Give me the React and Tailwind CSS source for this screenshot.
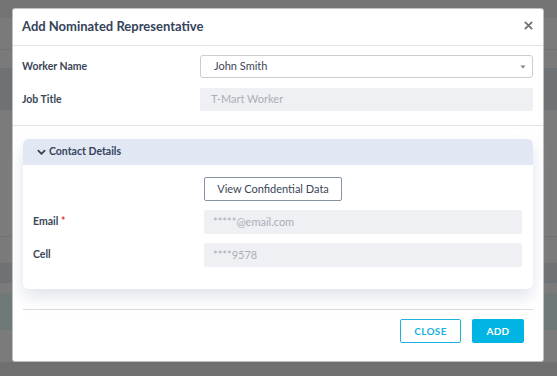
import React from "react";

export default function App() {
  return (
    <div className="relative w-[557px] h-[376px] overflow-hidden bg-[#7b7b7b]" style={{ fontFamily: "Lato, 'Noto Sans', sans-serif" }}>
      {/* background page (dimmed) */}
      <div className="flex flex-col h-full">
        <div className="h-[18px] bg-[#737373]" />
        <div className="h-[32px] bg-[#7a7a7a] border-b border-[#717171]" />
        <div className="h-[18px] bg-[#7a7a7a]" />
        <div className="h-[42px] bg-[#6f7275]" />
        <div className="h-[127px] bg-[#7b7b7b] border-b border-[#727272]" />
        <div className="h-[26px] bg-[#7a7a7a]" />
        <div className="h-[20px] bg-[#6f7275]" />
        <div className="h-[10px] bg-[#7a7a7a]" />
        <div className="h-[37px] bg-[#6f7a78]" />
        <div className="flex-1 bg-[#7b7b7b]" />
        <div className="h-[14px] bg-[#707070]" />
      </div>

      {/* modal */}
      <div className="absolute left-[12px] top-[8px] w-[532px] h-[354px] bg-white rounded-[3px] border border-[#5f5f5f]/40 flex flex-col">
        <div className="h-[37px] flex items-center justify-between pl-[9px] pr-[10px] border-b border-[#dfe2e6]">
          <div className="text-[13px] font-bold text-[#34435a]">Add Nominated Representative</div>
          <svg width="9" height="9" viewBox="0 0 10 10" className="mt-[-4px]">
            <path d="M1.5 1.5 L8.5 8.5 M8.5 1.5 L1.5 8.5" stroke="#6b6f75" strokeWidth="2" strokeLinecap="round" />
          </svg>
        </div>

        <div className="flex flex-col gap-[10px] pt-[9px] pb-[14px] pl-[9px] pr-[10px] border-b border-[#dfe2e6]">
          <div className="flex items-center h-[23px]">
            <div className="w-[178px] text-[10.5px] font-bold text-[#3b4658]">Worker Name</div>
            <div className="flex-1 h-[23px] rounded-[3px] border border-[#c9cdd3] flex items-center justify-between pl-[13px] pr-[6px]">
              <span className="text-[11px] text-[#3b4658]">John Smith</span>
              <svg width="6" height="4" viewBox="0 0 6 4"><path d="M0.5 0.5 L5.5 0.5 L3 3.5 Z" fill="#7b8088" /></svg>
            </div>
          </div>
          <div className="flex items-center h-[23px]">
            <div className="w-[178px] text-[10.5px] font-bold text-[#3b4658]">Job Title</div>
            <div className="flex-1 h-[23px] rounded-[2px] bg-[#eff0f4] flex items-center pl-[11px]">
              <span className="text-[11px] text-[#a9aeb6]">T-Mart Worker</span>
            </div>
          </div>
        </div>

        <div className="px-[10px] pt-[13px]">
          <div className="rounded-[6px] bg-white shadow-[0_8px_16px_rgba(200,206,224,0.55)] overflow-hidden">
            <div className="h-[26px] bg-[#e1e7f3] flex items-center pl-[14px] gap-[3px]">
              <svg width="9" height="7" viewBox="0 0 10 7"><path d="M1.5 1.5 L5 5 L8.5 1.5" stroke="#34435a" strokeWidth="2" fill="none" strokeLinecap="round" strokeLinejoin="round" /></svg>
              <span className="text-[10.5px] font-bold text-[#34435a]">Contact Details</span>
            </div>
            <div className="flex flex-col pt-[12px] pb-[22px] pl-[10px] pr-[11px]">
              <div className="flex">
                <div className="w-[171px]" />
                <div className="h-[24px] w-[138px] rounded-[2px] border border-[#8592a5] flex items-center justify-center text-[11px] text-[#3b4658]">View Confidential Data</div>
              </div>
              <div className="flex items-center h-[24px] mt-[9px]">
                <div className="w-[171px] text-[10.5px] font-bold text-[#3b4658]">Email <span className="text-[#e2322f]">*</span></div>
                <div className="flex-1 h-[24px] rounded-[2px] bg-[#eff0f4] flex items-center pl-[9px]">
                  <span className="text-[11px] text-[#a9aeb6]">*****@email.com</span>
                </div>
              </div>
              <div className="flex items-center h-[24px] mt-[9px]">
                <div className="w-[171px] text-[10.5px] font-bold text-[#3b4658]">Cell</div>
                <div className="flex-1 h-[24px] rounded-[2px] bg-[#eff0f4] flex items-center pl-[9px]">
                  <span className="text-[11px] text-[#a9aeb6]">****9578</span>
                </div>
              </div>
            </div>
          </div>
        </div>

        <div className="mx-[10px] mt-[20px] border-t border-[#d9dcdf] flex justify-end gap-[11px] pt-[9px] pr-[9px]">
          <div className="w-[61px] h-[24px] rounded-[2px] border border-[#1db3dd] flex items-center justify-center text-[10px] font-bold tracking-[0.3px] text-[#1db3dd]">CLOSE</div>
          <div className="w-[52px] h-[24px] rounded-[2px] bg-[#00b5e3] flex items-center justify-center text-[10px] font-bold tracking-[0.3px] text-white">ADD</div>
        </div>
      </div>
    </div>
  );
}
